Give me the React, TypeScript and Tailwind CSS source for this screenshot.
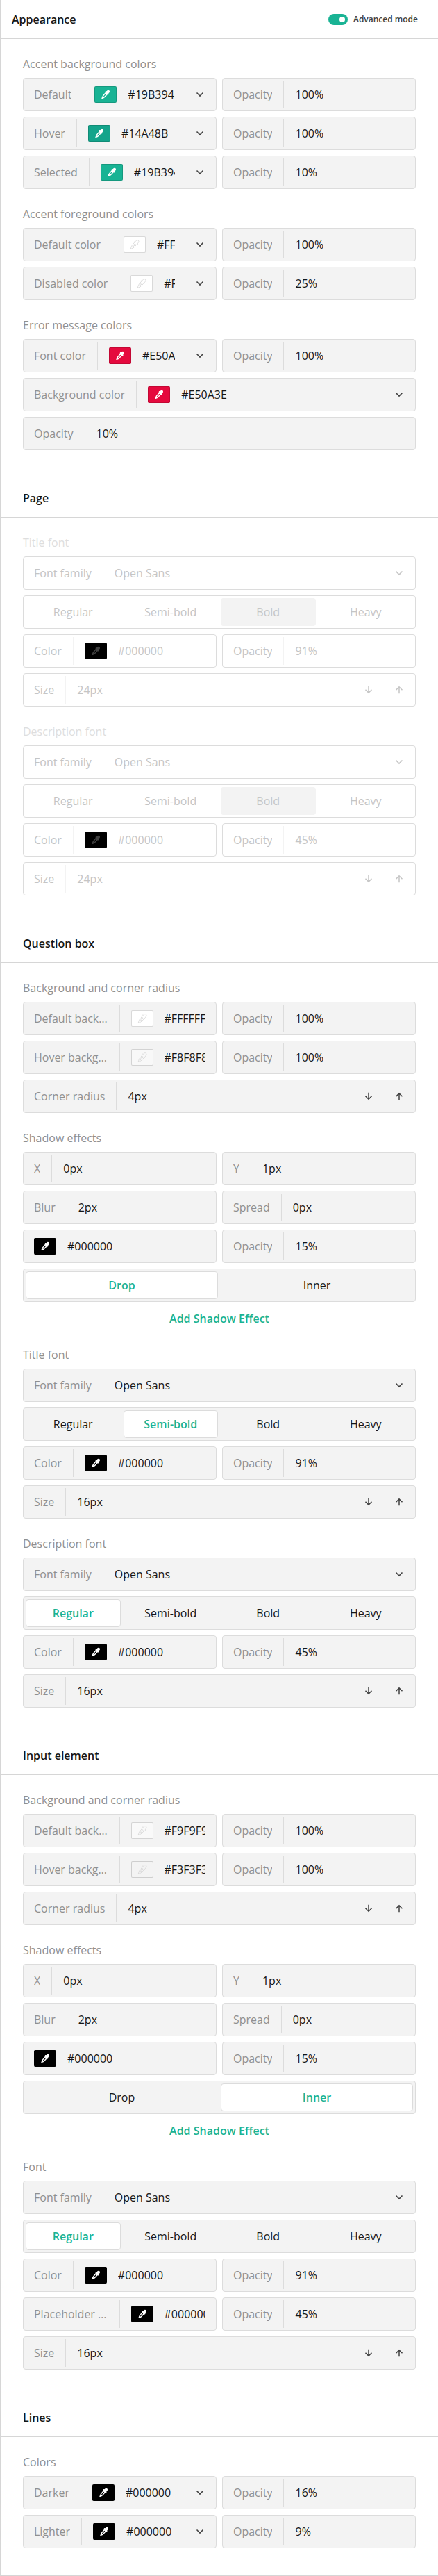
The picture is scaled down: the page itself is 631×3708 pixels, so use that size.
import { Fragment, type ReactNode } from "react";

type Tone = "normal" | "muted";

const FONT = "font-['Open_Sans',sans-serif]";

const DROPPER_PATH =
  "M13.4 2.2C12.4 1.3 11 1.5 10.2 2.5L9.6 3.3C9 2.9 8.3 3 7.9 3.5L7.7 3.9C7.5 4.3 7.6 4.7 7.8 5L4.4 9C3.5 10.1 3.1 11.2 2.7 12.6L2.2 14.1 3.5 13.9C5 13.6 6.2 13 7.2 12L10.7 8.2C11.1 8.5 11.6 8.5 12 8.2L12.3 7.9C12.7 7.4 12.7 6.8 12.3 6.3L13.3 5.5C14.2 4.6 14.3 3.1 13.4 2.2ZM6.7 10.4C6.1 11.1 5.4 11.5 4.7 11.7 4.9 10.9 5.3 10.2 5.8 9.6L8.3 6.8 9.2 7.6Z";

function Dropper({ stroke, fill }: { stroke: string; fill: string }) {
  return (
    <svg width="16" height="16" viewBox="0 0 16 16" fill="none" className="shrink-0">
      <path fillRule="evenodd" clipRule="evenodd" d={DROPPER_PATH} fill={fill} stroke={stroke} strokeWidth="0.7" />
    </svg>
  );
}

function Swatch({ color, tone }: { color: string; tone: Tone }) {
  const light = color.startsWith("#F");
  const icon = light ? "#D0D0D0" : tone === "muted" ? "#404040" : "#FFFFFF";
  return (
    <span
      className="flex h-6 w-8 shrink-0 items-center justify-center rounded-[2px] border border-black/15"
      style={{ backgroundColor: color }}
    >
      <Dropper stroke={light ? icon : "none"} fill={light ? "none" : icon} />
    </span>
  );
}

function Chevron() {
  return (
    <svg width="12" height="12" viewBox="0 0 12 12" fill="none" className="shrink-0">
      <path d="M1.5 3.5 6 8l4.5-4.5" stroke="currentColor" strokeWidth="1.6" />
    </svg>
  );
}

function Arrow({ up }: { up?: boolean }) {
  return (
    <svg width="12" height="12" viewBox="0 0 12 12" fill="none" className={up ? "shrink-0" : "shrink-0 rotate-180"}>
      <path d="M6 11.200V1.800M1.500 6.200 6 1.700 10.500 6.200" stroke="currentColor" strokeWidth="1.500" />
    </svg>
  );
}

interface FieldProps {
  label?: string;
  value: string;
  swatch?: boolean;
  select?: boolean;
  spin?: boolean;
  wide?: boolean;
  tone?: Tone;
}

function Field({ label, value, swatch, select, spin, wide, tone = "normal" }: FieldProps) {
  const muted = tone === "muted";
  return (
    <div
      className={`flex h-12 min-w-0 items-center rounded border border-[#DCDCDC] px-[15px] ${wide ? "col-span-2" : ""} ${muted ? "bg-white text-[#C5C5C5]" : "bg-[#F3F3F3] text-[#161616]"}`}
    >
      {label && (
        <div
          className={`mr-4 flex h-10 shrink-0 items-center border-r pr-4 ${muted ? "border-[#F3F3F3] text-[#C5C5C5]" : "border-[#DCDCDC] text-[#909090]"}`}
        >
          <span className={wide ? "" : "max-w-[106.500px] truncate tracking-[-0.01px]"}>{label}</span>
        </div>
      )}
      {swatch && (
        <span className="mr-4 flex">
          <Swatch color={value} tone={tone} />
        </span>
      )}
      <span className="min-w-0 flex-1 overflow-hidden whitespace-nowrap">{value}</span>
      {select && (
        <span className={`ml-[30px] mr-[2px] ${muted ? "text-[#C5C5C5]" : "text-[#404040]"}`}>
          <Chevron />
        </span>
      )}
      {spin && (
        <span className={`mr-[2px] flex gap-8 ${muted ? "text-[#C5C5C5]" : "text-[#404040]"}`}>
          <Arrow />
          <Arrow up />
        </span>
      )}
    </div>
  );
}

function Segments({ items, active, tone = "normal" }: { items: string[]; active: string; tone?: Tone }) {
  const muted = tone === "muted";
  return (
    <div
      className={`col-span-2 flex h-12 gap-1 rounded border border-[#DCDCDC] p-[3px] ${muted ? "bg-white text-[#C5C5C5]" : "bg-[#F3F3F3] text-[#161616]"}`}
    >
      {items.map((item) => {
        const on = item === active;
        const look = !on
          ? "border-transparent"
          : muted
            ? "border-transparent bg-[#F3F3F3]"
            : "border-[#DCDCDC] bg-white font-semibold text-[#19B394]";
        return (
          <button key={item} className={`flex h-10 min-w-0 flex-1 basis-0 items-center justify-center rounded border ${look}`}>
            {item}
          </button>
        );
      })}
    </div>
  );
}

function Group({ title, tone, children }: { title: string; tone?: Tone; children: ReactNode }) {
  return (
    <section className="mt-6">
      <h3 className={`mb-2 h-6 leading-6 ${tone === "muted" ? "text-[#DEDEDE]" : "text-[#909090]"}`}>{title}</h3>
      <div className="grid grid-cols-2 gap-2">{children}</div>
    </section>
  );
}

function Panel({ title, children }: { title?: string; children: ReactNode }) {
  return (
    <>
      {title && (
        <div className="mt-[41px] flex h-14 items-center border-b border-[#D6D6D6] px-8">
          <h2 className="font-semibold text-[#161616]">{title}</h2>
        </div>
      )}
      <div className="px-8">{children}</div>
    </>
  );
}

const WEIGHTS = ["Regular", "Semi-bold", "Bold", "Heavy"];

interface FontProps {
  title: string;
  weight: string;
  opacity: string;
  size: string;
  tone?: Tone;
  children?: ReactNode;
}

function FontGroup({ title, weight, opacity, size, tone, children }: FontProps) {
  return (
    <Group title={title} tone={tone}>
      <Field label="Font family" value="Open Sans" select wide tone={tone} />
      <Segments items={WEIGHTS} active={weight} tone={tone} />
      <Field label="Color" value="#000000" swatch tone={tone} />
      <Field label="Opacity" value={opacity} tone={tone} />
      {children}
      <Field label="Size" value={size} spin wide tone={tone} />
    </Group>
  );
}

function ColorRows({ rows, select }: { rows: [string, string, string][]; select?: boolean }) {
  return (
    <>
      {rows.map(([label, value, opacity]) => (
        <Fragment key={label}>
          <Field label={label} value={value} swatch select={select} />
          <Field label="Opacity" value={opacity} />
        </Fragment>
      ))}
    </>
  );
}

function ShadowGroup({ active }: { active: string }) {
  return (
    <>
      <Group title="Shadow effects">
        <Field label="X" value="0px" />
        <Field label="Y" value="1px" />
        <Field label="Blur" value="2px" />
        <Field label="Spread" value="0px" />
        <Field value="#000000" swatch />
        <Field label="Opacity" value="15%" />
        <Segments items={["Drop", "Inner"]} active={active} />
      </Group>
      <button className="mt-2 flex h-8 w-full items-center justify-center font-semibold text-[#19B394]">
        Add Shadow Effect
      </button>
    </>
  );
}

export default function App() {
  return (
    <main className={`h-[3708px] w-full border-b border-l border-[#D6D6D6] bg-white text-base ${FONT}`}>
      <header className="flex h-14 items-center justify-between border-b border-[#D6D6D6] pl-4 pr-[29px]">
        <h1 className="font-semibold text-[#161616]">Appearance</h1>
        <label className="flex items-center gap-2 text-xs font-semibold text-[#404040]">
          <span className="flex h-4 w-7 items-center justify-end rounded-full bg-[#19B394] p-1">
            <span className="size-2 rounded-full bg-white" />
          </span>
          Advanced mode
        </label>
      </header>

      <Panel>
        <Group title="Accent background colors">
          <ColorRows
            select
            rows={[
              ["Default", "#19B394", "100%"],
              ["Hover", "#14A48B", "100%"],
              ["Selected", "#19B394", "10%"],
            ]}
          />
        </Group>
        <Group title="Accent foreground colors">
          <ColorRows
            select
            rows={[
              ["Default color", "#FFFFFF", "100%"],
              ["Disabled color", "#FFFFFF", "25%"],
            ]}
          />
        </Group>
        <Group title="Error message colors">
          <ColorRows select rows={[["Font color", "#E50A3E", "100%"]]} />
          <Field label="Background color" value="#E50A3E" swatch select wide />
          <Field label="Opacity" value="10%" wide />
        </Group>
      </Panel>

      <Panel title="Page">
        <FontGroup title="Title font" weight="Bold" opacity="91%" size="24px" tone="muted" />
        <FontGroup title="Description font" weight="Bold" opacity="45%" size="24px" tone="muted" />
      </Panel>

      <Panel title="Question box">
        <Group title="Background and corner radius">
          <ColorRows
            rows={[
              ["Default background", "#FFFFFF", "100%"],
              ["Hover background", "#F8F8F8", "100%"],
            ]}
          />
          <Field label="Corner radius" value="4px" spin wide />
        </Group>
        <ShadowGroup active="Drop" />
        <FontGroup title="Title font" weight="Semi-bold" opacity="91%" size="16px" />
        <FontGroup title="Description font" weight="Regular" opacity="45%" size="16px" />
      </Panel>

      <Panel title="Input element">
        <Group title="Background and corner radius">
          <ColorRows
            rows={[
              ["Default background", "#F9F9F9", "100%"],
              ["Hover background", "#F3F3F3", "100%"],
            ]}
          />
          <Field label="Corner radius" value="4px" spin wide />
        </Group>
        <ShadowGroup active="Inner" />
        <FontGroup title="Font" weight="Regular" opacity="91%" size="16px">
          <ColorRows rows={[["Placeholder color", "#000000", "45%"]]} />
        </FontGroup>
      </Panel>

      <Panel title="Lines">
        <Group title="Colors">
          <ColorRows
            select
            rows={[
              ["Darker", "#000000", "16%"],
              ["Lighter", "#000000", "9%"],
            ]}
          />
        </Group>
      </Panel>
    </main>
  );
}
